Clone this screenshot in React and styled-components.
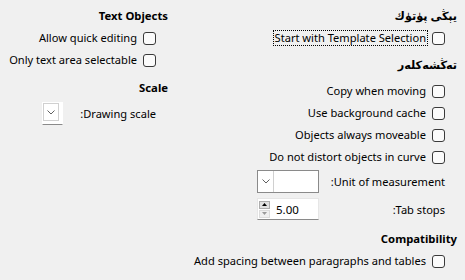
import styled, { createGlobalStyle } from "styled-components";

const GlobalStyle = createGlobalStyle`
  html, body {
    margin: 0;
    padding: 0;
    background: #f0f0f0;
  }
  body {
    font-family: "Noto Sans", "DejaVu Sans", sans-serif;
    font-size: 11.1px;
    color: #000;
  }
`;

const Page = styled.div`
  direction: rtl;
  width: 465px;
  height: 280px;
  box-sizing: border-box;
  padding: 8px 8px 0 0;
  display: grid;
  grid-template-columns: 1fr 168px;
  align-items: start;
  overflow: hidden;
`;

const Column = styled.div`
  display: flex;
  flex-direction: column;
`;

const Section = styled.section`
  display: flex;
  flex-direction: column;
  margin-top: ${(p) => p.$top || 0}px;
`;

const Heading = styled.div`
  font-weight: bold;
  font-size: 11.3px;
  line-height: 16px;
  height: 16px;
  white-space: nowrap;
`;

const Body = styled.div`
  display: flex;
  flex-direction: column;
  padding-inline-start: 12px;
  margin-top: ${(p) => p.$top || 0}px;
`;

const Row = styled.div`
  display: flex;
  align-items: center;
  gap: 4px;
  height: 22px;
`;

const Box = styled.span`
  width: 11px;
  height: 11px;
  flex: none;
  border: 1px solid #3a3a3a;
  border-radius: 3px;
  background: #fbfbfb;
`;

const Label = styled.span`
  white-space: nowrap;
  line-height: 14px;
  padding: 0 1px;
  border: 1px dotted ${(p) => (p.$focus ? "#000" : "transparent")};
`;

const FieldGrid = styled.div`
  display: grid;
  grid-template-columns: ${(p) => p.$label}px ${(p) => p.$field}px;
  column-gap: ${(p) => p.$gap}px;
  row-gap: ${(p) => p.$rowGap || 0}px;
  align-items: center;
  margin-top: ${(p) => p.$top || 0}px;
`;

const FieldLabel = styled.span`
  white-space: nowrap;
  height: ${(p) => p.$h || 22}px;
  display: flex;
  align-items: center;
`;

const Combo = styled.div`
  direction: ltr;
  display: flex;
  height: ${(p) => p.$h}px;
  box-sizing: border-box;
  background: #fff;
  border: 1px solid ${(p) => (p.$framed ? "#8a8a8a" : "transparent")};
  border-bottom-color: #8a8a8a;
`;

const DropButton = styled.span`
  width: 16px;
  flex: none;
  display: flex;
  align-items: center;
  justify-content: center;
  box-sizing: border-box;
  border: 1px solid #d0d0d0;
  height: ${(p) => p.$h || "100%"};
  ${(p) => p.$framed && "border-width: 0 1px 0 0;"}
`;

const Spin = styled.div`
  direction: ltr;
  display: flex;
  align-items: center;
  gap: 6px;
  height: 22px;
  box-sizing: border-box;
  background: #fff;
  border: 1px solid #e6e6e6;
  border-bottom-color: #8a8a8a;
  padding-left: 1px;
  font-size: 11.5px;
`;

const SpinButtons = styled.span`
  display: flex;
  flex-direction: column;
  gap: 1px;
`;

const SpinButton = styled.span`
  width: 11px;
  height: 8px;
  box-sizing: border-box;
  display: flex;
  align-items: center;
  justify-content: center;
  background: ${(p) => (p.$dim ? "#f0f0f0" : "#e1e1e1")};
  border: 1px solid ${(p) => (p.$dim ? "#dcdcdc" : "#adadad")};
`;

const Chevron = () => (
  <svg width="8" height="5" viewBox="0 0 8 5">
    <path d="M0.5 0.5 L4 4 L7.5 0.5" fill="none" stroke="#606060" strokeWidth="1" />
  </svg>
);

const Tri = ({ down, color }) => (
  <svg width="5" height="3" viewBox="0 0 5 3">
    <path d={down ? "M0 0 H5 L2.5 3 Z" : "M0 3 H5 L2.5 0 Z"} fill={color} />
  </svg>
);

function Check({ children, focus }) {
  return (
    <Row>
      <Box />
      <Label $focus={focus}>{children}</Label>
    </Row>
  );
}

export default function App() {
  return (
    <>
      <GlobalStyle />
      <Page>
        <Column>
          <Section>
            <Heading>يېڭى پۈتۈك</Heading>
            <Body $top={3}>
              <Check focus>Start with Template Selection</Check>
            </Body>
          </Section>
          <Section $top={8}>
            <Heading>تەڭشەكلەر</Heading>
            <Body $top={7}>
              <Check>Copy when moving</Check>
              <Check>Use background cache</Check>
              <Check>Objects always moveable</Check>
              <Check>Do not distort objects in curve</Check>
              <FieldGrid $label={113} $field={62} $gap={13} $rowGap={5} $top={2}>
                <FieldLabel $h={23}>Unit of measurement:</FieldLabel>
                <Combo $h={23} $framed>
                  <DropButton $framed>
                    <Chevron />
                  </DropButton>
                </Combo>
                <FieldLabel>Tab stops:</FieldLabel>
                <Spin>
                  <SpinButtons>
                    <SpinButton>
                      <Tri color="#000" />
                    </SpinButton>
                    <SpinButton $dim>
                      <Tri down color="#9a9a9a" />
                    </SpinButton>
                  </SpinButtons>
                  <span>5.00</span>
                </Spin>
              </FieldGrid>
            </Body>
          </Section>
          <Section $top={11}>
            <Heading>Compatibility</Heading>
            <Body $top={3}>
              <Check>Add spacing between paragraphs and tables</Check>
            </Body>
          </Section>
        </Column>

        <Column>
          <Section>
            <Heading>Text Objects</Heading>
            <Body $top={3}>
              <Check>Allow quick editing</Check>
              <Check>Only text area selectable</Check>
            </Body>
          </Section>
          <Section $top={9}>
            <Heading>Scale</Heading>
            <Body $top={6}>
              <FieldGrid $label={76} $field={21} $gap={17}>
                <FieldLabel $h={23}>Drawing scale:</FieldLabel>
                <Combo $h={23}>
                  <DropButton $h="18px">
                    <Chevron />
                  </DropButton>
                </Combo>
              </FieldGrid>
            </Body>
          </Section>
        </Column>
      </Page>
    </>
  );
}
